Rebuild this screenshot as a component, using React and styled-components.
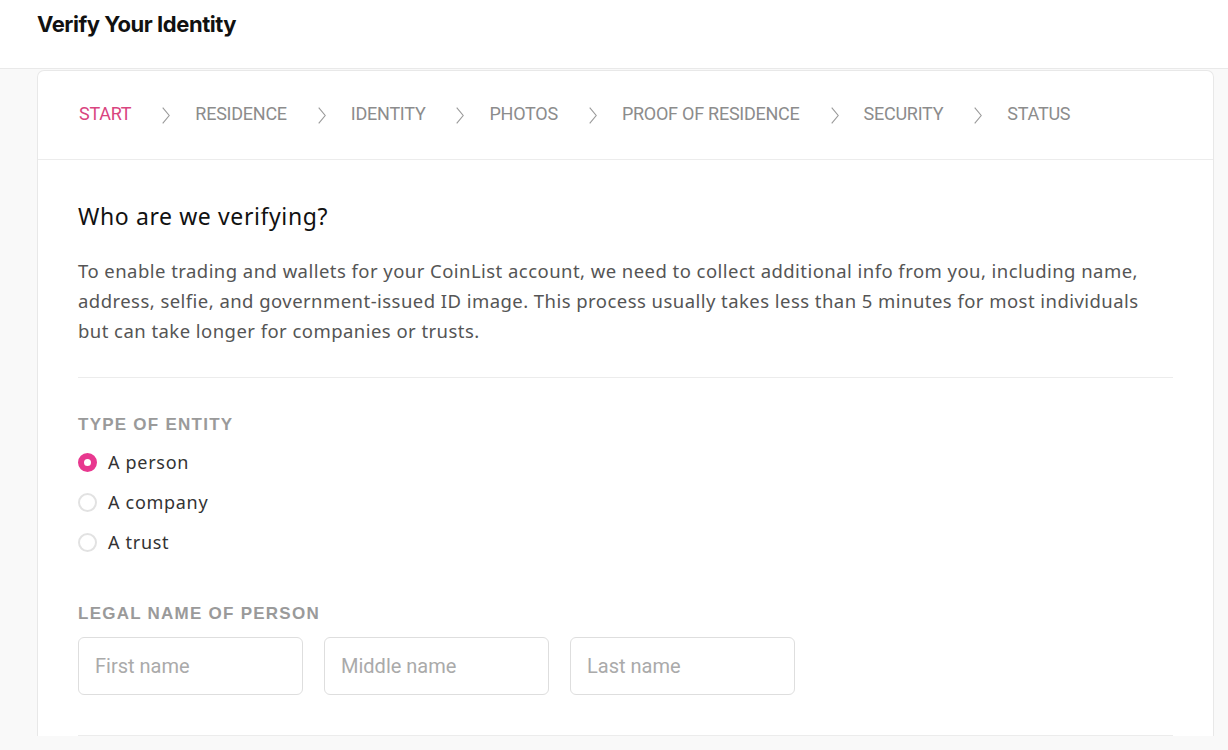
import React from "react";
import styled, { createGlobalStyle } from "styled-components";

const Global = createGlobalStyle`
  html, body { margin: 0; padding: 0; background: #f9f9f9; }
  body { font-family: "Liberation Sans", Arial, sans-serif; color: #222; }
  * { box-sizing: border-box; }
`;

const Page = styled.div`
  min-height: 750px;
  background: #f9f9f9;
`;

const Header = styled.header`
  height: 69px;
  background: #fff;
  border-bottom: 1px solid #e9e9e9;
  padding: 0 37px;
  display: flex;
  align-items: flex-start;
`;

const Title = styled.h1`
  margin: 9px 0 0;
  font-family: Inter, "Noto Sans", sans-serif;
  font-weight: 700;
  font-size: 22px;
  letter-spacing: -0.45px;
  color: #111;
  line-height: 30px;
`;

const Main = styled.main`
  padding: 1px 14px 0 37px;
`;

const Card = styled.section`
  background: #fff;
  border: 1px solid #e8e8e8;
  border-radius: 7px 7px 0 0;
  border-bottom: none;
`;

const Steps = styled.nav`
  height: 89px;
  display: flex;
  align-items: center;
  padding: 0 41px;
  border-bottom: 1px solid #ececec;
`;

const Step = styled.span`
  font-family: Roboto, "Liberation Sans", sans-serif;
  font-size: 18px;
  letter-spacing: -0.25px;
  color: ${(p) => (p.$active ? "#d9457f" : "#8c8c8c")};
  text-transform: uppercase;
  line-height: 20px;
  margin-top: -2px;
`;

const Chevron = styled.svg`
  width: 8px;
  height: 17px;
  margin: 0 25px 0 31px;
  flex: none;
`;

const Body = styled.div`
  padding: 41px 40px 0 40px;
`;

const Heading = styled.h2`
  margin: 0;
  font-family: "Noto Sans", "Open Sans", sans-serif;
  font-weight: 400;
  font-size: 23px;
  line-height: 30px;
  color: #111;
  letter-spacing: 0.6px;
`;

const Intro = styled.p`
  margin: 25px 0 0;
  font-family: "Noto Sans", "Open Sans", sans-serif;
  font-size: 18.5px;
  line-height: 30px;
  color: #555;
  letter-spacing: 0.45px;
`;

const Divider = styled.hr`
  margin: ${(p) => p.$top || 0}px 0 0;
  border: none;
  border-top: 1px solid #ececec;
`;

const Section = styled.div`
  padding-top: ${(p) => p.$top}px;
`;

const Label = styled.div`
  font-family: "Liberation Sans", Arial, sans-serif;
  font-weight: 700;
  font-size: 17px;
  letter-spacing: 1.25px;
  color: #9a9a9a;
  line-height: 20px;
  text-transform: uppercase;
`;

const RadioList = styled.div`
  display: flex;
  flex-direction: column;
  gap: 10px;
  margin-top: 12px;
`;

const RadioRow = styled.label`
  display: flex;
  align-items: center;
  gap: 11px;
  height: 30px;
  font-family: "Noto Sans", "Open Sans", sans-serif;
  font-size: 18px;
  color: #333;
  letter-spacing: 0.7px;
`;

const RadioDot = styled.span`
  width: 19px;
  height: 19px;
  border-radius: 50%;
  flex: none;
  ${(p) =>
    p.$checked
      ? `background: #fff; border: 6px solid #e8388f;`
      : `background: #fff; border: 2px solid #e2e2e2;`}
`;

const Inputs = styled.div`
  display: flex;
  gap: 21px;
  margin-top: 13px;
`;

const Input = styled.input`
  width: 225px;
  height: 58px;
  border: 1px solid #dedede;
  border-radius: 6px;
  padding: 0 16px;
  font-family: Roboto, "Liberation Sans", sans-serif;
  font-size: 20px;
  letter-spacing: 0;
  color: #333;
  background: #fff;
  outline: none;
  &::placeholder { color: #aaa; }
`;

const steps = ["Start", "Residence", "Identity", "Photos", "Proof of Residence", "Security", "Status"];

export default function App() {
  return (
    <Page>
      <Global />
      <Header>
        <Title>Verify Your Identity</Title>
      </Header>
      <Main>
        <Card>
          <Steps>
            {steps.map((s, i) => (
              <React.Fragment key={s}>
                {i > 0 && (
                  <Chevron viewBox="0 0 8 17">
                    <path d="M0.7 0.7 L7.2 8.5 L0.7 16.3" fill="none" stroke="#9a9a9a" strokeWidth="1.1" />
                  </Chevron>
                )}
                <Step $active={i === 0}>{s}</Step>
              </React.Fragment>
            ))}
          </Steps>
          <Body>
            <Heading>Who are we verifying?</Heading>
            <Intro>
              To enable trading and wallets for your CoinList account, we need to collect additional info from you, including name, address, selfie, and government-issued ID image. This process usually takes less than 5 minutes for most individuals but can take longer for companies or trusts.
            </Intro>
            <Divider $top={31} />
            <Section $top={37}>
              <Label>Type of Entity</Label>
              <RadioList>
                <RadioRow><RadioDot $checked />A person</RadioRow>
                <RadioRow><RadioDot />A company</RadioRow>
                <RadioRow><RadioDot />A trust</RadioRow>
              </RadioList>
            </Section>
            <Section $top={47}>
              <Label>Legal Name of Person</Label>
              <Inputs>
                <Input placeholder="First name" />
                <Input placeholder="Middle name" />
                <Input placeholder="Last name" />
              </Inputs>
            </Section>
            <Divider $top={40} />
          </Body>
        </Card>
      </Main>
    </Page>
  );
}
